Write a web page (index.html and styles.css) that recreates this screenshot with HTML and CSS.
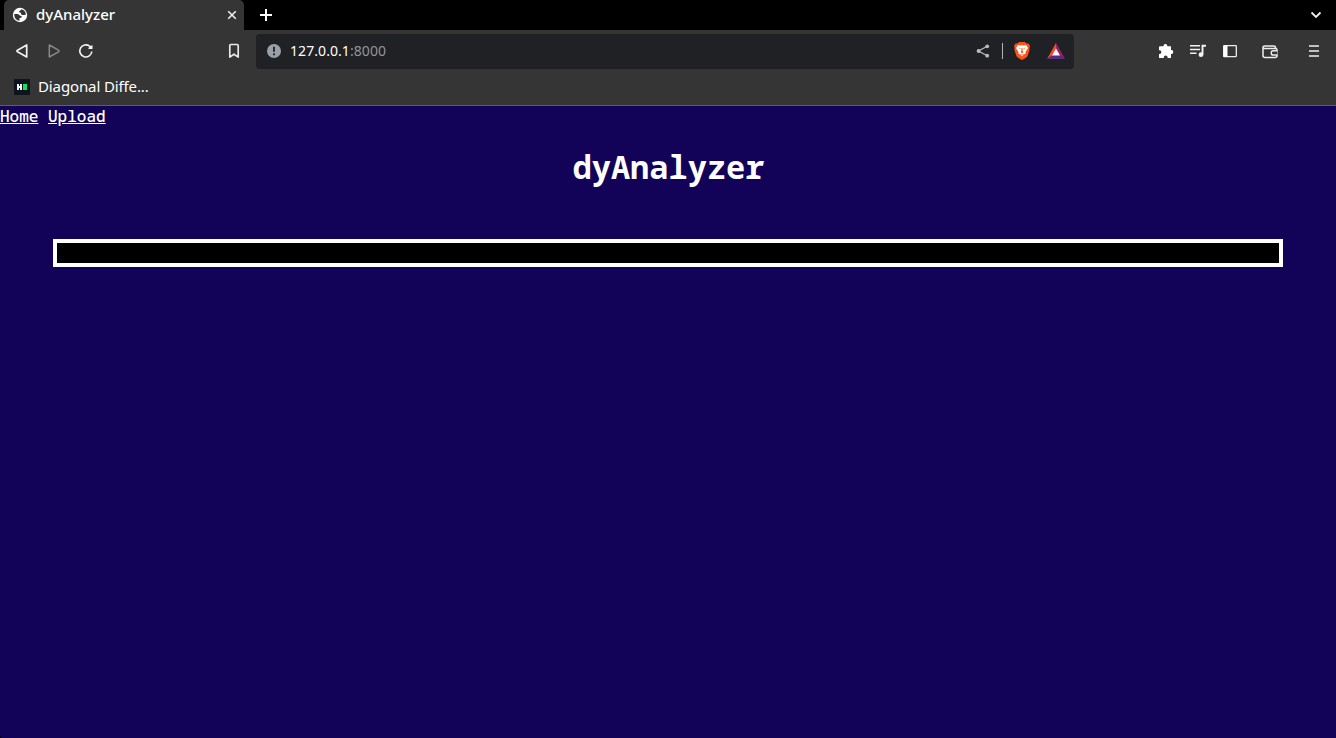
FILE: index.html
```html
<!DOCTYPE html>
<html lang="en">
<head>
<meta charset="utf-8">
<title>dyAnalyzer</title>
<link rel="stylesheet" href="styles.css">
</head>
<body>
<div class="tabs">
  <div class="tab">
    <svg class="globe" width="16" height="16" viewBox="0 0 16 16"><circle cx="8" cy="8" r="7.2" fill="#fff"/><path d="M2.300 7h3.200c1.600 0 1.700 1.800 3.200 1.800 1.200 0 1.300 1.200.6 1.900L7.500 11v2.800C4.300 13.500 2 10.700 2.300 7ZM9.300 2.200c-.2 1.300-2 1.300-2.200 2.400C7 6 8.600 5.300 9 6.200c.4 1 0 1.500 1.300 1.800 1.300.3 2.300-.5 3.500-.3C14 5 12.300 2.600 9.300 2.200Z" fill="#353535"/></svg>
    <span class="tab-title">dyAnalyzer</span>
    <svg class="close" width="10" height="10" viewBox="0 0 10 10"><path d="m1.200 1.200 7.600 7.600m0-7.600L1.200 8.800" stroke="#eee" stroke-width="1.600"/></svg>
  </div>
  <svg class="plus" width="12" height="12" viewBox="0 0 12 12"><path d="M6 0v12M0 6h12" stroke="#fff" stroke-width="2"/></svg>
  <svg class="chevron" width="12" height="8" viewBox="0 0 12 8"><path d="m1.500 1.500 4.500 4.500 4.500-4.500" fill="none" stroke="#eee" stroke-width="1.800"/></svg>
</div>
<div class="toolbar">
  <div class="nav">
    <svg width="16" height="16" viewBox="0 0 16 16"><path d="M12.700 2v12L3.500 8.800q-1.200-.8 0-1.600Z" fill="none" stroke="#f2f2f2" stroke-width="1.700" stroke-linejoin="round"/></svg>
    <svg width="16" height="16" viewBox="0 0 16 16"><path d="M3.300 2v12l9.200-5.200q1.200-.8 0-1.600Z" fill="none" stroke="#888" stroke-width="1.500" stroke-linejoin="round"/></svg>
    <svg width="16" height="16" viewBox="0 0 16 16"><path d="M13.800 8.500A6 6 0 1 1 11.500 3.200" fill="none" stroke="#f2f2f2" stroke-width="1.600"/><path d="M10.300 6h4.200V1.900l-1.600 1-1.200-.8Z" fill="#f2f2f2"/></svg>
  </div>
  <svg class="bookmark" width="12" height="16" viewBox="0 0 12 16"><path d="M1.800 2.500q0-1 1-1h6.400q1 0 1 1v11.600L6 11.200l-4.200 2.900Z" fill="none" stroke="#e8e8e8" stroke-width="1.700" stroke-linejoin="round"/></svg>
  <div class="address">
    <svg width="14" height="14" viewBox="0 0 14 14"><circle cx="7" cy="7" r="7" fill="#9aa0a6"/><path d="M7 2.800v5M7 9.200v2" stroke="#202124" stroke-width="1.800"/></svg>
    <span class="url">127.0.0.1<span class="port">:8000</span></span>
    <svg class="share" width="14" height="14" viewBox="0 0 14 14"><path d="M11.200 2.200 2.500 7l8.700 4.800" fill="none" stroke="#bbb" stroke-width="1.300"/><g fill="#bbb"><circle cx="11.200" cy="2.300" r="1.900"/><circle cx="2.600" cy="7" r="2"/><circle cx="11.200" cy="11.700" r="1.900"/></g></svg>
    <span class="divider"></span>
    <svg class="lion" width="16" height="18" viewBox="0 0 16 18"><path d="M5 0h6l1.500 1.500 2-.1L16 4l-.6 2 .2 2-2 6q-1 2-5.600 4-4.600-2-5.600-4l-2-6 .2-2L0 4l1.500-2.600 2 .1Z" fill="#fb5416"/><path d="m4 3 2.500.5L8 3l1.500.5L12 3l2 3-2.500 4 .2 1.500-2.200 1.200L8 14.500l-1.500-1.800-2.200-1.200.2-1.500L2 6Z" fill="#fff"/><path d="m4 5.600 2.600.6-.5.900Zm8 0-2.600.6.500.9ZM7.600 6h.8l.3 3.300.9.7L8 11.200 6.400 10l.9-.7ZM5.500 11.800 8 12.500l2.500-.7L8 13.300Z" fill="#fb5416"/></svg>
    <svg class="triangle" width="18" height="16" viewBox="0 0 18 16"><path d="M9 0 0 16l9-6Z" fill="#ff4724"/><path d="m9 0 9 16-9-6Z" fill="#9e1f63"/><path d="m0 16 9-6 9 6Z" fill="#572c85"/><path d="m9 5.500 4 7H5Z" fill="#fff"/></svg>
  </div>
  <div class="actions">
    <svg width="16" height="16" viewBox="0 0 16 16"><path d="M2 3.300h3.500V3a1.900 1.900 0 0 1 3.800 0v.3H13v3.800h.4a1.900 1.900 0 0 1 0 3.800H13V15H9.600v-.7a1.900 1.900 0 0 0-3.800 0v.7H1v-4h.5a1.900 1.900 0 0 0 0-3.800H1V4.300q0-1 1-1Z" fill="#fff"/></svg>
    <svg width="16" height="16" viewBox="0 0 16 16"><path d="M0 2.800h10M0 6.500h10M0 10.200h6.500" stroke="#f2f2f2" stroke-width="1.600"/><path d="M12.500 11.500V2.800H16" fill="none" stroke="#f2f2f2" stroke-width="1.900"/><circle cx="11" cy="11.700" r="2.400" fill="#f2f2f2"/></svg>
    <svg width="16" height="16" viewBox="0 0 16 16"><rect x="1.700" y="2.700" width="12.600" height="11" rx=".7" fill="none" stroke="#eee" stroke-width="1.300"/><path d="M1.500 2.500h4v11.400h-4Z" fill="#fff"/></svg>
    <svg class="wallet" width="16" height="16" viewBox="0 0 16 16"><path d="M1 4.500V12.500q0 2 2 2h10q2 0 2-2V7q0-1.500-1.500-1.500H2Q1 5.500 1 4.500q0-1.500 2-1.500h8.500q2 0 2 1.500v1" fill="none" stroke="#eee" stroke-width="1.500"/><path d="M15.300 7.800h-4a2.100 2.100 0 0 0 0 4.200h4" fill="#353535" stroke="#eee" stroke-width="1.500"/></svg>
    <svg class="menu" width="10" height="12" viewBox="0 0 10 12"><path d="M0 1h10M0 6h10M0 11h10" stroke="#eee" stroke-width="1.700"/></svg>
  </div>
</div>
<div class="bookmarks">
  <svg width="16" height="16" viewBox="0 0 16 16"><rect width="16" height="16" fill="#0e141e"/><path d="M4 5v6M7 5v6M4 8h3" stroke="#fff" stroke-width="1.900"/><path d="M9 5h4v6H9Z" fill="#05e85c"/></svg>
  <span class="bookmark-name">Diagonal Diffe...</span>
</div>
<main class="page">
  <nav><a href="#">Home</a> <a href="#">Upload</a></nav>
  <h1>dyAnalyzer</h1>
  <div class="panel"></div>
</main>
</body>
</html>
```
FILE: styles.css
```css
* { box-sizing: border-box; }
html { background: #000; }
body { margin: 0; height: 738px; overflow: hidden; display: flex; flex-direction: column; background: #000; color: #fff; font: 15px/20px "Noto Sans", sans-serif; }
svg { display: block; flex: none; }
.tabs { height: 30px; display: flex; align-items: center; padding: 0 20px 0 4px; background: #000; }
.tab { width: 240px; height: 30px; display: flex; align-items: center; padding: 0 7px 0 8px; background: #353535; border-radius: 5px 5px 0 0; }
.tab-title { margin-left: 8px; padding-bottom: 2px; font-weight: 500; }
.close { margin-left: auto; }
.plus { margin-left: 16px; }
.chevron { margin-left: auto; margin-right: -6px; }
.toolbar { height: 42px; display: flex; align-items: center; padding: 0 17px 0 14px; background: #353535; }
.nav { display: flex; gap: 16px; }
.bookmark { margin-left: 134px; }
.address { width: 818px; height: 35px; margin-left: 16px; margin-top: 1px; display: flex; align-items: center; padding: 0 9px 2px 11px; background: #202124; border-radius: 4px; font-size: 14px; }
.url { margin-left: 9px; letter-spacing: 0.07px; }
.port { color: #929598; }
.share { margin-left: auto; }
.divider { width: 1px; height: 16px; margin-left: 12px; background: #b5b5b5; }
.lion { margin-left: 11px; }
.triangle { margin-left: 17px; }
.actions { display: flex; align-items: center; gap: 16px; margin-left: auto; }
.wallet { margin-left: 8px; }
.menu { margin-left: 15px; }
.bookmarks { height: 34px; display: flex; align-items: center; gap: 8px; padding: 0 14px 4px; background: #353535; border-bottom: 1px solid #5f5f64; }
.bookmark-name { padding-bottom: 2px; letter-spacing: -0.12px; }
.page { flex: 1; background: #120358; border-bottom-left-radius: 3px; font: 500 16px/21px "Noto Sans Mono", "DejaVu Sans Mono", monospace; }
.page a { color: #fff; text-underline-offset: 1px; }
.page h1 { margin: 18px 0 51px; padding-left: 1px; font-size: 32px; line-height: 43px; text-align: center; }
.panel { height: 28px; margin: 0 53px; background: #000; border: 4px solid #fff; }
```
